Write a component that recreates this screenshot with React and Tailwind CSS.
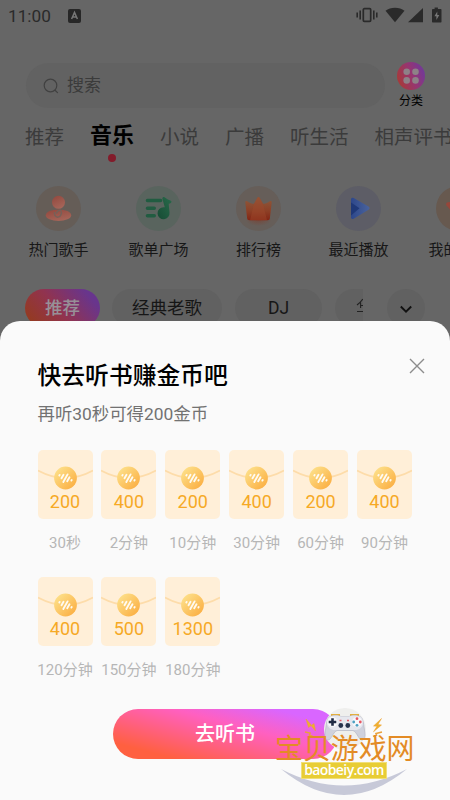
import React from 'react'

const TABS = [
  { label: '推荐' },
  { label: '音乐', active: true },
  { label: '小说' },
  { label: '广播' },
  { label: '听生活' },
  { label: '相声评书' }
]

const REWARDS = [
  { coins: 200, time: '30秒' },
  { coins: 400, time: '2分钟' },
  { coins: 200, time: '10分钟' },
  { coins: 400, time: '30分钟' },
  { coins: 200, time: '60分钟' },
  { coins: 400, time: '90分钟' },
  { coins: 400, time: '120分钟' },
  { coins: 500, time: '150分钟' },
  { coins: 1300, time: '180分钟' }
]

function StatusBar() {
  return (
    <div className="flex h-8 items-center justify-between px-2">
      <div className="flex items-center">
        <span className="w-[60px] text-[17.2px] leading-8 text-[#2a2a2a]">11:00</span>
        <svg className="-mt-px h-[14px] w-[13px]" viewBox="0 0 13 14">
          <rect width="13" height="14" rx="2" fill="#272727" />
          <path d="M3.6 10 6.5 3.4 9.4 10M4.6 8h3.8" fill="none" stroke="#777" strokeWidth="1.5" />
        </svg>
      </div>
      <svg className="-mt-0.5 h-4 w-[86px]" viewBox="0 0 86 16" fill="#2a2a2a">
        <rect x="7.3" y="1.7" width="7.4" height="12.6" rx="1" fill="none" stroke="#2a2a2a" strokeWidth="1.7" />
        <path d="M4.2 3.5v9M1.2 5.5v5M17.8 3.5v9M20.8 5.5v5" stroke="#2a2a2a" strokeWidth="1.6" />
        <path d="M29.500 3.800C34.500-.3 43.500-.3 48.500 3.800L39 15.200z" />
        <path d="M67 1v14.200H52z" />
        <path d="M78.600 0.500h3.300v1.500h2.600c.7 0 1 .4 1 1v11.400c0 .6-.3 1-1 1h-7.500c-.6 0-1-.4-1-1V3c0-.6.4-1 1-1h1.600z" />
        <path d="m81.300 4.500-2.900 4.800h2V13l2.900-4.900h-2z" fill="#777" />
      </svg>
    </div>
  )
}

function SearchRow() {
  return (
    <div className="mt-[30px] flex h-[46px] items-start pl-[26px]">
      <div className="mt-px flex h-[45px] w-[359px] items-center rounded-full bg-[#626262] pl-[17px] text-[#3b3b3b]">
        <svg className="h-4 w-4" viewBox="0 0 16 16" fill="none" stroke="#414141" strokeWidth="1.2">
          <circle cx="7.500" cy="7.500" r="6.300" />
          <path d="m12.300 12.500 2.200 2.200" strokeLinecap="round" />
        </svg>
        <span className="ml-2 text-[17px]">搜索</span>
      </div>
      <div className="ml-3 flex w-7 flex-col items-center">
        <svg className="h-7 w-7 shrink-0" viewBox="0 0 28 28">
          <defs>
            <linearGradient id="cat" x1="0" y1="0.700" x2="1" y2="0.300">
              <stop offset="0" stopColor="#a83a36" />
              <stop offset="0.550" stopColor="#963572" />
              <stop offset="1" stopColor="#70399b" />
            </linearGradient>
          </defs>
          <circle cx="14" cy="14" r="14" fill="url(#cat)" />
          <g fill="#8e8187">
            <circle cx="9.700" cy="9.800" r="3.300" />
            <circle cx="18.500" cy="9.800" r="3.300" />
            <circle cx="9.700" cy="18.400" r="3.300" />
            <circle cx="18.500" cy="18.400" r="3.300" />
          </g>
        </svg>
        <span className="text-[12px] leading-[22px] whitespace-nowrap text-black">分类</span>
      </div>
    </div>
  )
}

function Tabs() {
  return (
    <div className="mt-[12px] flex h-[42px] items-start gap-[26px] overflow-hidden pl-[25px]">
      {TABS.map(t => (
        <div key={t.label} className="flex shrink-0 flex-col items-center whitespace-nowrap">
          {t.active ? (
            <>
              <span className="text-[22px] leading-[32px] font-bold text-black">{t.label}</span>
              <span className="mt-[2px] h-2 w-2 rounded-full bg-[#831c2b]" />
            </>
          ) : (
            <span className="text-[19.500px] leading-[35px] text-[#3b3b3b]">{t.label}</span>
          )}
        </div>
      ))}
    </div>
  )
}

function SingerIcon() {
  return (
    <svg className="h-[45px] w-[45px]" viewBox="0 0 45 45">
      <defs>
        <linearGradient id="singer" x1="0" y1="0" x2="0.500" y2="1">
          <stop offset="0" stopColor="#92473d" />
          <stop offset="1" stopColor="#a56458" />
        </linearGradient>
      </defs>
      <circle cx="22.500" cy="22.500" r="22.500" fill="#655d57" />
      <ellipse cx="22.500" cy="29.200" rx="12.700" ry="5.800" fill="url(#singer)" />
      <circle cx="22.500" cy="16.300" r="6.500" fill="url(#singer)" />
      <path d="M18.500 26c-.5 3 .8 5.200 3.200 5.200 3 0 4.500-4 3.200-6.700-1.400-1-4.400 1-4.400 3.300" fill="none" stroke="#756159" strokeWidth="1.400" />
    </svg>
  )
}

function PlaylistIcon() {
  return (
    <svg className="h-[45px] w-[45px]" viewBox="0 0 45 45">
      <defs>
        <linearGradient id="note" x1="0" y1="1" x2="1" y2="0">
          <stop offset="0" stopColor="#174b34" />
          <stop offset="1" stopColor="#286b4b" />
        </linearGradient>
      </defs>
      <circle cx="22.500" cy="22.500" r="22.500" fill="#59645e" />
      <path d="M11.500 14.500h13M11.500 22.300h6.700M11.500 29.800h6.700" stroke="#215c41" strokeWidth="3.600" strokeLinecap="round" />
      <path d="M27 11.200c1.500-.8 2.300.7 4 1.800 2 1.200 4 1.500 4.500 2.500.3 1-1.400 2.400-2.800 2.300l.8 8.700a6 6 0 1 1-6-5.300l1.300.1-2.300-8.100c-.2-.9-.1-1.600.5-2z" fill="url(#note)" />
    </svg>
  )
}

function CrownIcon() {
  return (
    <svg className="h-[45px] w-[45px]" viewBox="0 0 45 45">
      <defs>
        <linearGradient id="crown" x1="0" y1="0" x2="0" y2="1">
          <stop offset="0" stopColor="#8c5b3e" />
          <stop offset="0.600" stopColor="#8d4026" />
          <stop offset="1" stopColor="#822514" />
        </linearGradient>
        <radialGradient id="crownGlow">
          <stop offset="0" stopColor="#7a4132" />
          <stop offset="1" stopColor="#665e59" />
        </radialGradient>
      </defs>
      <circle cx="22.500" cy="22.500" r="22.500" fill="#665e59" />
      <ellipse cx="22.500" cy="34" rx="13" ry="6" fill="url(#crownGlow)" opacity="0.700" />
      <path d="M9.300 16.500c-.1-1.500 1-2 2-1.200 2.300 1.800 4.500 2.800 6.700 2.400L21.200 12c.6-1.300 2-1.300 2.600 0l3.200 5.700c2.200.4 4.400-.6 6.700-2.400 1-.8 2.100-.3 2 1.200l-1.800 15.500c-.2 1.500-.8 2.200-2.300 2.200H13.400c-1.500 0-2.100-.7-2.300-2.200z" fill="url(#crown)" />
      <path d="M21.200 12c.6-1.300 2-1.300 2.600 0l3.200 5.700 4 16.500H14l4-16.500z" fill="#a04a2c" opacity="0.450" />
    </svg>
  )
}

function PlayIcon() {
  return (
    <svg className="h-[45px] w-[45px]" viewBox="0 0 45 45">
      <defs>
        <linearGradient id="play" x1="0" y1="0" x2="1" y2="0">
          <stop offset="0" stopColor="#2d478a" />
          <stop offset="1" stopColor="#4a639d" />
        </linearGradient>
      </defs>
      <circle cx="22.500" cy="22.500" r="22.500" fill="#5d5d66" />
      <path d="M15 13.500c0-1.600 1.400-2.200 2.700-1.400l14.800 8.500c1.400.8 1.400 2.300 0 3.100l-14.800 9c-1.300.8-2.700.2-2.700-1.400z" fill="url(#play)" />
      <path d="M15 16.500 23.500 22.200 15 29.500z" fill="#1f3878" />
    </svg>
  )
}

function HeartIcon() {
  return (
    <svg className="h-[45px] w-[45px]" viewBox="0 0 45 45">
      <circle cx="22.500" cy="22.500" r="22.500" fill="#67594f" />
      <path d="M22.500 33 10.500 19.500c-1-1.800 0-3 1.500-3.200l10.500-2z" fill="#97463a" />
    </svg>
  )
}

const SHORTCUTS = [
  { label: '热门歌手', Icon: SingerIcon },
  { label: '歌单广场', Icon: PlaylistIcon },
  { label: '排行榜', Icon: CrownIcon },
  { label: '最近播放', Icon: PlayIcon },
  { label: '我的收藏', Icon: HeartIcon }
]

function Shortcuts() {
  return (
    <div className="mt-[24px] flex overflow-hidden pl-[8.500px]">
      {SHORTCUTS.map(({ label, Icon }) => (
        <div key={label} className="flex w-[100px] shrink-0 flex-col items-center">
          <Icon />
          <span className="mt-[7px] text-[15px] leading-6 text-[#171717]">{label}</span>
        </div>
      ))}
    </div>
  )
}

function Filters() {
  return (
    <div className="mt-[27px] flex h-[38px] items-center pl-[25px] text-[17.500px] text-[#161616]">
      <span className="flex h-full w-[75px] items-center justify-center rounded-full bg-[linear-gradient(50deg,#943a22_10%,#91334f_45%,#68358d_85%)] font-medium text-[#979097]">推荐</span>
      <span className="ml-[12px] flex h-full w-[110px] items-center justify-center rounded-full bg-[#616161] pt-px">经典老歌</span>
      <span className="ml-[13px] flex h-full w-[87px] items-center justify-center rounded-full bg-[#616161] pt-px">DJ</span>
      <span className="ml-[13px] flex h-full w-[28px] items-center overflow-hidden rounded-l-full bg-[#616161] pl-[20.500px]">
        <svg className="-mt-1 h-4 w-2 shrink-0" viewBox="0 0 8 16" fill="none" stroke="#222" strokeWidth="1.100">
          <path d="M6.800 1C5.500 3 3.500 5 1 7M4.600 4.500v5.500M5 7.500h3M1 13.500h7" />
        </svg>
      </span>
      <span className="ml-[24px] flex h-full w-[38px] items-center justify-center rounded-full bg-[#616161]">
        <svg className="mt-0.5 h-[9px] w-3" viewBox="0 0 12 9" fill="none" stroke="#111" strokeWidth="1.900">
          <path d="m0.800 1.500 5.200 5.200 5.200-5.200" />
        </svg>
      </span>
    </div>
  )
}

function Reward({ coins, time }) {
  return (
    <div className="flex w-[55px] flex-col items-center">
      <div className="flex h-[69px] w-full flex-col items-center overflow-hidden rounded-[5px] bg-[#ffefd8]">
        <svg className="h-[41px] w-[55px] shrink-0" viewBox="0 0 55 41">
          <defs>
            <linearGradient id="coin" x1="0.100" y1="0.100" x2="0.900" y2="0.900">
              <stop offset="0" stopColor="#fde08a" />
              <stop offset="1" stopColor="#fbaf43" />
            </linearGradient>
          </defs>
          <path d="M0 20.500Q27.500 35.500 55 20.500" fill="none" stroke="#fddcaa" strokeWidth="1.700" />
          <circle cx="27.500" cy="28" r="11.400" fill="url(#coin)" />
          <path d="M21.300 25.400l.3-.5M23.500 28.200l2-3.500M25.300 32l4.300-7.600M29.200 31.200l2.300-4M33.400 30.600l.3-.5" stroke="#fffaf0" strokeWidth="1.900" strokeLinecap="round" />
        </svg>
        <span className="text-[18px] leading-[22px] text-[#f6a925]">{coins}</span>
      </div>
      <span className="mt-[13px] text-[15px] leading-[22px] whitespace-nowrap text-[#b6b6b6]">{time}</span>
    </div>
  )
}

function Watermark() {
  return (
    <div className="absolute top-[703px] left-[270px] h-[97px] w-[150px]">
      <svg className="absolute inset-0 h-full w-full" viewBox="0 0 150 97">
        <circle cx="75" cy="26" r="21" fill="#efefed" />
        <path d="M11 66Q74 118 137 66Q74 99 11 66z" fill="#c7c9d8" />
        <path d="M61 12h9M80 12h9" stroke="#e4af3c" strokeWidth="2" />
        <path d="M60 13.500c3-1.500 8-1.500 11 0h8c3-1.500 8-1.500 11 0 2.200 1 3.200 4 3.700 8l1.300 9c.5 4-.8 6.500-3 6.500-3.500 0-4.500-7.500-9-9.500H67c-4.500 2-5.500 9.500-9 9.500-2.200 0-3.500-2.500-3-6.500l1.300-9c.5-4 1.500-7 3.700-8z" fill="#cfd1dc" stroke="#b6b8c5" strokeWidth="0.700" />
        <path d="M60 13.500c3-1.500 8-1.500 11 0h8c3-1.500 8-1.500 11 0 2.200 1 3.200 4 3 7-.5 4-4 6.500-8 6.500H65c-4 0-7.500-2.500-8-6.500 0-3 .8-6 3-7z" fill="#e6e7ee" />
        <circle cx="62.500" cy="19" r="5" fill="#f8f8fb" />
        <circle cx="87" cy="19" r="5" fill="#f8f8fb" />
        <path d="M58.700 19h7.600M62.500 15.200v7.600" stroke="#202b44" strokeWidth="2.600" />
        <circle cx="87" cy="15.700" r="1.400" fill="#e75660" />
        <circle cx="90.300" cy="19" r="1.400" fill="#e75660" />
        <circle cx="83.700" cy="19" r="1.400" fill="#4d9fc1" />
        <circle cx="87" cy="22.300" r="1.400" fill="#4d9fc1" />
        <circle cx="70.800" cy="22.500" r="2.400" fill="#26324c" />
        <circle cx="77.800" cy="22.500" r="2.400" fill="#26324c" />
        <path d="M69.500 17.500h2M77 17.500h2" stroke="#e65b66" strokeWidth="1.400" />
        <path d="m36 16 2.500 8.500 2.500-2 4.500 5.500-1.500-7.500-2.500 1.800zM111.500 15.500l-8 7.500 3.500.3-3.500 5.500 8-6.800-3.500-.5z" fill="#eeb02f" stroke="#eea02f" strokeWidth="0.500" />
        <path d="m35 29 5 1-.5 2 3 1.500M112 29l-6 1.500.5 1.500-3.500 1.500" fill="none" stroke="#e9a13a" strokeWidth="1.600" />
      </svg>
      <div className="absolute top-[27px] left-[5px] text-[27.900px] leading-[40px] whitespace-nowrap text-[#e38b25]">宝贝游戏网</div>
      <div className="absolute top-[59px] left-[31px] flex h-[17px] w-[86px] items-center justify-center border border-[#f0df78] bg-[#e8cd35] pb-0.5 font-['Open_Sans',sans-serif] text-[14px] font-semibold tracking-[-0.600px] text-white">baobeiy.com</div>
    </div>
  )
}

export default function App() {
  return (
    <div className="relative flex h-[800px] w-[450px] flex-col overflow-hidden bg-[#666] font-['Roboto','Noto_Sans_CJK_SC',sans-serif]">
      <div className="h-[321px] shrink-0">
        <StatusBar />
        <SearchRow />
        <Tabs />
        <Shortcuts />
        <Filters />
      </div>

      {/* 底部弹窗 */}
      <div className="z-10 flex h-[479px] shrink-0 flex-col rounded-t-[20px] bg-[#fafafa] pt-[36px] pr-[25px] pl-[37.500px]">
        <div className="flex items-start justify-between">
          <h1 className="text-[23.800px] leading-[38px] font-medium text-black">快去听书赚金币吧</h1>
          <svg className="mt-px h-4 w-4" viewBox="0 0 16 16" stroke="#8c8c8c" strokeWidth="1.400">
            <path d="m1 1 14 14M15 1 1 15" />
          </svg>
        </div>
        <p className="mt-[6px] text-[17.400px] leading-[26px] text-[#727272]">再听30秒可得200金币</p>
        <div className="mt-[23px] grid grid-cols-[repeat(6,55px)] gap-x-[8.900px] gap-y-[23px]">
          {REWARDS.map((r, i) => (
            <Reward key={i} {...r} />
          ))}
        </div>
        <button className="mt-[28px] ml-[75px] h-[50px] w-[225px] rounded-full bg-[linear-gradient(15deg,#ff6040_15%,#ff60c0_60%,#d966ff_85%)] text-[20px] font-medium text-white">去听书</button>
      </div>

      <div className="z-20"><Watermark /></div>
    </div>
  )
}
